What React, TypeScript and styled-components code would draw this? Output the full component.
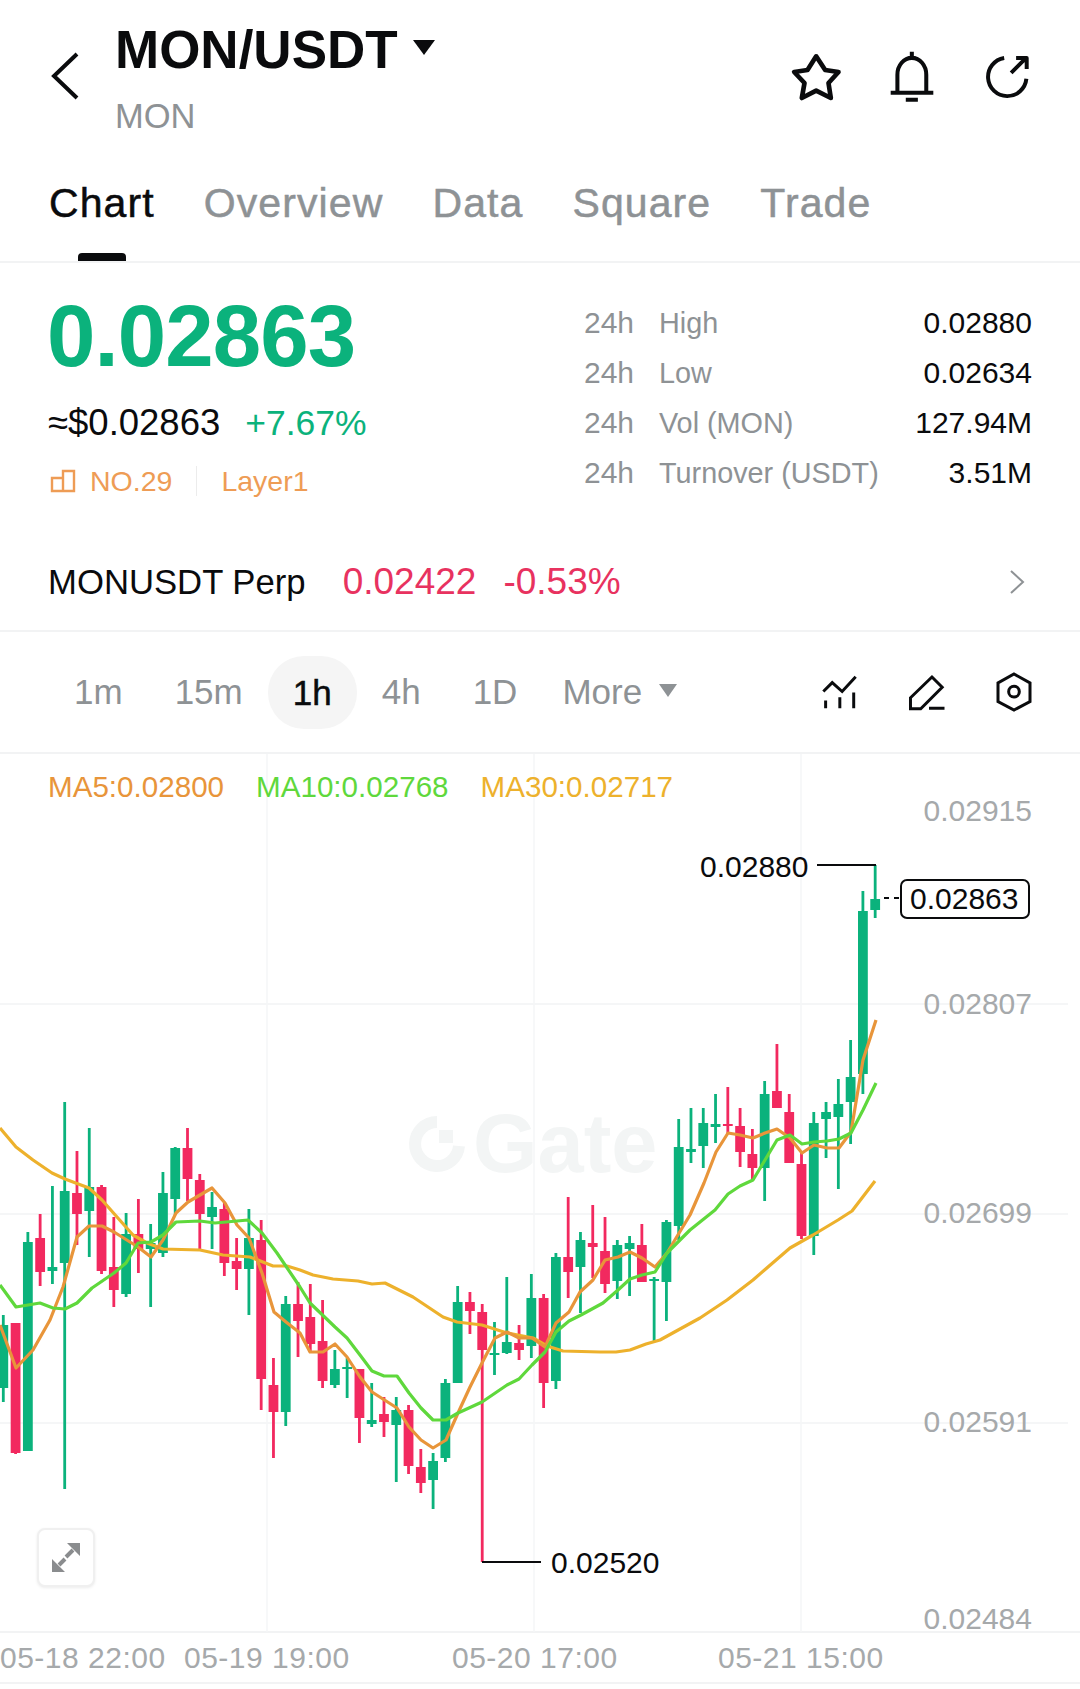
import React from 'react'
import styled, { createGlobalStyle } from 'styled-components'

const GlobalStyle = createGlobalStyle`
  html, body { margin: 0; padding: 0; background: #fff; }
  body { font-family: "Liberation Sans", Arial, sans-serif; color: #0a0b0d; }
`

const GREEN = '#0bb27c'
const RED = '#f2295f'
const ORANGE = '#ee9c55'
const GREY = '#8e9295'
const LIGHT_GREY = '#a6a9ab'
const LINE = '#f2f3f4'

type Candle = [number, number, number, number, 'g' | 'r']

// high, body top, body bottom, low, colour (page pixels)
const candles: Candle[] = [
  [1315, 1325, 1388, 1402, 'g'], [1323, 1323, 1453, 1454, 'r'], [1232, 1242, 1451, 1451, 'g'],
  [1214, 1238, 1272, 1286, 'r'], [1186, 1267, 1271, 1284, 'g'], [1102, 1191, 1263, 1489, 'g'],
  [1151, 1193, 1214, 1245, 'r'], [1128, 1187, 1211, 1257, 'g'], [1185, 1187, 1271, 1274, 'r'],
  [1217, 1267, 1290, 1307, 'r'], [1213, 1234, 1294, 1297, 'g'], [1199, 1234, 1249, 1273, 'r'],
  [1224, 1243, 1249, 1307, 'g'], [1172, 1193, 1253, 1257, 'g'], [1147, 1148, 1199, 1215, 'g'],
  [1128, 1148, 1179, 1201, 'r'], [1174, 1180, 1214, 1249, 'r'], [1192, 1207, 1217, 1249, 'g'],
  [1203, 1209, 1263, 1276, 'r'], [1238, 1261, 1269, 1290, 'r'], [1209, 1238, 1269, 1315, 'g'],
  [1220, 1240, 1379, 1410, 'r'], [1358, 1385, 1412, 1458, 'r'], [1296, 1304, 1412, 1426, 'g'],
  [1282, 1304, 1321, 1357, 'r'], [1284, 1317, 1344, 1352, 'r'], [1300, 1341, 1381, 1388, 'r'],
  [1350, 1369, 1385, 1388, 'g'], [1358, 1367, 1369, 1398, 'g'], [1369, 1369, 1418, 1443, 'r'],
  [1383, 1420, 1424, 1427, 'g'], [1397, 1414, 1422, 1437, 'r'], [1397, 1410, 1425, 1482, 'g'],
  [1405, 1410, 1466, 1474, 'r'], [1449, 1467, 1483, 1493, 'r'], [1453, 1461, 1480, 1509, 'g'],
  [1379, 1383, 1458, 1462, 'g'], [1286, 1302, 1383, 1383, 'g'], [1292, 1302, 1311, 1334, 'r'],
  [1304, 1312, 1350, 1562, 'r'], [1322, 1353, 1355, 1375, 'g'], [1277, 1342, 1353, 1354, 'g'],
  [1325, 1343, 1350, 1360, 'r'], [1274, 1298, 1346, 1358, 'g'], [1294, 1298, 1383, 1408, 'r'],
  [1253, 1257, 1381, 1389, 'g'], [1197, 1257, 1272, 1298, 'r'], [1232, 1240, 1267, 1313, 'g'],
  [1205, 1243, 1247, 1278, 'r'], [1217, 1251, 1284, 1293, 'r'], [1240, 1245, 1281, 1299, 'g'],
  [1236, 1243, 1249, 1296, 'g'], [1224, 1245, 1282, 1282, 'r'], [1277, 1279, 1281, 1341, 'g'],
  [1220, 1222, 1282, 1321, 'g'], [1119, 1147, 1226, 1240, 'g'], [1108, 1149, 1152, 1163, 'g'],
  [1108, 1123, 1146, 1168, 'g'], [1094, 1124, 1127, 1143, 'g'], [1087, 1124, 1125, 1133, 'r'],
  [1108, 1126, 1152, 1167, 'r'], [1129, 1154, 1168, 1180, 'r'], [1081, 1094, 1168, 1201, 'g'],
  [1044, 1091, 1108, 1108, 'r'], [1094, 1112, 1163, 1163, 'r'], [1153, 1164, 1236, 1239, 'r'],
  [1112, 1123, 1236, 1255, 'g'], [1102, 1112, 1119, 1158, 'g'], [1079, 1104, 1117, 1189, 'g'],
  [1040, 1077, 1102, 1144, 'g'], [891, 911, 1074, 1094, 'g'], [865, 899, 910, 918, 'g'],
]

const ma5 =
  '0,1325 16,1368 33,1350 50,1320 63,1287 77,1237 89,1226 102,1226 114,1232 138,1247 151,1257 163,1240 176,1213 188,1202 212,1188 225,1203 237,1225 249,1238 262,1273 274,1312 286,1322 300,1333 310,1352 323,1352 335,1344 347,1357 360,1377 372,1392 397,1408 409,1427 421,1440 433,1448 446,1440 458,1413 470,1387 482,1363 495,1338 507,1332 519,1338 532,1338 545,1347 556,1323 569,1312 580,1292 593,1280 605,1260 618,1257 630,1252 642,1258 655,1267 667,1253 690,1215 704,1183 716,1152 728,1133 740,1135 753,1138 765,1133 777,1129 790,1138 802,1153 814,1145 827,1148 839,1148 851,1132 863,1060 876,1020'
const ma10 =
  '0,1285 16,1307 40,1303 53,1308 65,1309 77,1303 92,1288 114,1273 126,1263 138,1243 151,1242 163,1235 176,1222 200,1221 215,1223 248,1220 262,1233 277,1253 300,1287 310,1303 335,1327 347,1338 360,1355 372,1371 384,1376 397,1376 409,1393 421,1408 433,1420 446,1420 458,1413 482,1402 507,1385 519,1379 532,1365 545,1352 556,1332 569,1321 581,1315 603,1303 618,1290 630,1279 642,1275 655,1272 667,1253 690,1230 715,1210 728,1194 740,1186 753,1180 765,1160 777,1140 790,1135 802,1144 814,1142 827,1141 839,1139 851,1133 863,1110 876,1083'
const ma30 =
  '0,1128 16,1147 33,1160 52,1173 65,1179 89,1188 102,1200 117,1217 133,1235 147,1243 163,1249 200,1250 223,1255 250,1257 273,1266 287,1266 300,1270 313,1275 333,1279 358,1281 372,1284 385,1283 413,1297 443,1317 457,1322 482,1325 507,1333 533,1338 547,1346 563,1351 600,1352 616,1352 630,1350 646,1344 660,1340 680,1329 700,1318 727,1300 753,1280 790,1248 813,1235 838,1220 852,1211 875,1181'

const gridRows = [1004, 1214, 1423]
const gridCols = [267, 534, 801]
const axisPrices: [string, number][] = [
  ['0.02915', 821],
  ['0.02807', 1014],
  ['0.02699', 1223],
  ['0.02591', 1432],
  ['0.02484', 1629],
]

const Page = styled.div`
  width: 1080px;
  height: 1689px;
  overflow: hidden;
  background: #fff;
`

const Header = styled.header`
  height: 148px;
  display: flex;
  align-items: flex-start;
  padding: 0 48px 0 50px;
  box-sizing: border-box;
`

const BackIcon = styled.svg`
  width: 32px;
  height: 52px;
  margin-top: 51px;
`

const TitleBlock = styled.div`
  margin-left: 33px;
  padding-top: 18px;
  flex: 1;
`

const Title = styled.h1`
  margin: 0;
  font-size: 53px;
  line-height: 63px;
  font-weight: 700;
  display: flex;
  align-items: center;
  gap: 15px;
`

const TitleCaret = styled.svg`
  width: 22px;
  height: 15px;
  margin-bottom: 4px;
`

const Subtitle = styled.div`
  font-size: 34.5px;
  line-height: 40px;
  color: ${GREY};
  margin-top: 15px;
`

const HeaderActions = styled.div`
  display: flex;
  align-items: center;
  margin-top: 50px;
`

const HeaderIcon = styled.svg<{ $w: number; $h: number; $gap?: number }>`
  width: ${(p) => p.$w}px;
  height: ${(p) => p.$h}px;
  margin-left: ${(p) => p.$gap || 0}px;
  fill: none;
  stroke: #0a0b0d;
  stroke-linejoin: round;
`

const Tabs = styled.nav`
  height: 115px;
  display: flex;
  gap: 49px;
  padding-left: 49px;
  box-sizing: border-box;
  border-bottom: 2px solid ${LINE};
`

const Tab = styled.div<{ $active?: boolean }>`
  position: relative;
  font-size: 41px;
  line-height: 48px;
  padding-top: 31px;
  letter-spacing: 1.1px;
  -webkit-text-stroke: 0.5px ${(p) => (p.$active ? '#0a0b0d' : GREY)};
  color: ${(p) => (p.$active ? '#0a0b0d' : GREY)};

  &::after {
    content: '';
    display: ${(p) => (p.$active ? 'block' : 'none')};
    position: absolute;
    left: 29px;
    top: 105px;
    width: 48px;
    height: 8px;
    border-radius: 4px 4px 0 0;
    background: #0a0b0d;
  }
`

const Overview = styled.section`
  height: 239px;
  display: flex;
  justify-content: space-between;
  padding: 0 48px;
  box-sizing: border-box;
`

const PriceBlock = styled.div`
  padding-top: 28px;
`

const BigPrice = styled.div`
  font-size: 87px;
  line-height: 90px;
  font-weight: 700;
  letter-spacing: -0.9px;
  margin-left: -1px;
  color: ${GREEN};
`

const PriceLine = styled.div`
  display: flex;
  gap: 25px;
  margin-top: 20px;
  font-size: 36.5px;
  line-height: 44px;
`

const Change = styled.span`
  color: ${GREEN};
  font-size: 35.5px;
`

const TagLine = styled.div`
  display: flex;
  align-items: center;
  margin-top: 18px;
  font-size: 28.5px;
  line-height: 36px;
  color: ${ORANGE};
`

const RankIcon = styled.svg`
  width: 26px;
  height: 24px;
  margin: 0 14px 0 2px;
  fill: none;
  stroke: ${ORANGE};
  stroke-width: 2.4;
`

const TagDivider = styled.span`
  width: 1px;
  height: 30px;
  background: #ececec;
  margin: 0 24px;
`

const Stats = styled.div`
  width: 448px;
  padding-top: 35px;
  font-size: 30px;
`

const StatRow = styled.div`
  height: 50px;
  display: flex;
  align-items: center;
  line-height: 50px;
`

const StatPeriod = styled.span`
  width: 75px;
  color: ${GREY};
`

const StatLabel = styled.span`
  color: ${GREY};
  flex: 1;
  font-size: 28.8px;
`

const StatValue = styled.span`
  color: #0a0b0d;
`

const PerpRow = styled.section`
  height: 130px;
  display: flex;
  align-items: center;
  padding: 32px 48px 0;
  box-sizing: border-box;
  border-bottom: 2px solid ${LINE};
  font-size: 34.7px;
`

const PerpPrice = styled.span`
  color: #e8325f;
  font-size: 37px;
  margin-left: 37px;
`

const PerpChange = styled.span`
  color: #e8325f;
  font-size: 37px;
  margin-left: 27px;
  flex: 1;
`

const PerpArrow = styled.svg`
  width: 18px;
  height: 26px;
  margin-right: 6px;
  fill: none;
  stroke: ${GREY};
  stroke-width: 2;
`

const Intervals = styled.section`
  height: 120px;
  display: flex;
  align-items: center;
  padding: 0 47px 0 74px;
  box-sizing: border-box;
  font-size: 35px;
`

const Interval = styled.div<{ $active?: boolean; $gap: number }>`
  margin-left: ${(p) => p.$gap}px;
  color: ${(p) => (p.$active ? '#0a0b0d' : GREY)};
  ${(p) =>
    p.$active
      ? `
    width: 89px;
    height: 73px;
    line-height: 73px;
    text-align: center;
    background: #f5f5f5;
    border-radius: 36px;
    -webkit-text-stroke: 0.5px #0a0b0d;
  `
      : ''}
`

const MoreCaret = styled.svg`
  width: 18px;
  height: 13px;
  margin-left: 17px;
  margin-bottom: 4px;
`

const IntervalTools = styled.div`
  margin-left: auto;
  display: flex;
  align-items: center;
`

const ToolIcon = styled.svg<{ $w: number; $h: number; $gap?: number }>`
  width: ${(p) => p.$w}px;
  height: ${(p) => p.$h}px;
  margin-left: ${(p) => p.$gap || 0}px;
  fill: none;
  stroke: #0a0b0d;
  stroke-width: 9;
`

const ChartArea = styled.section`
  position: relative;
  height: 881px;
  border-top: 2px solid ${LINE};
  border-bottom: 2px solid ${LINE};
  box-sizing: border-box;
`

const ChartSvg = styled.svg`
  display: block;
  width: 1080px;
  height: 877px;
  overflow: visible;
`

const AxisText = styled.text`
  font-size: 30px;
  fill: ${LIGHT_GREY};
`

const NoteText = styled.text`
  font-size: 30px;
  fill: #0a0b0d;
`

const Watermark = styled.text`
  font-size: 83px;
  font-weight: 700;
  fill: #f3f5f5;
`

const Legend = styled.div`
  position: absolute;
  left: 48px;
  top: 14px;
  display: flex;
  gap: 32px;
  font-size: 29.6px;
  line-height: 38px;
`

const LegendItem = styled.span<{ $color: string }>`
  color: ${(p) => p.$color};
`

const FullscreenButton = styled.div`
  position: absolute;
  left: 37px;
  top: 774px;
  width: 58px;
  height: 59px;
  box-sizing: border-box;
  border: 2px solid #f0f0f0;
  border-radius: 8px;
  background: #fff;
  box-shadow: 0 1px 3px rgba(0, 0, 0, 0.08);
  display: flex;
  align-items: center;
  justify-content: center;
`

const TimeAxis = styled.div`
  height: 51px;
  display: grid;
  grid-template-columns: 184px 268px 266px 1fr;
  align-items: center;
  border-bottom: 2px solid ${LINE};
  box-sizing: border-box;
  font-size: 30px;
  letter-spacing: 0.5px;
  color: ${LIGHT_GREY};
`

function Chart() {
  return (
    <ChartSvg viewBox="0 754 1080 877">
      {gridRows.map((y) => (
        <line key={y} x1="0" x2="1068" y1={y} y2={y} stroke={LINE} strokeWidth="1.5" />
      ))}
      {gridCols.map((x) => (
        <line key={x} x1={x} x2={x} y1="754" y2="1632" stroke="#f5f6f7" strokeWidth="1.5" />
      ))}

      {/* watermark */}
      <path d="M437 1122 A22 22 0 1 0 459 1146" fill="none" stroke="#f3f5f5" strokeWidth="12" />
      <rect x="439" y="1130" width="14" height="13" fill="#f3f5f5" />
      <Watermark x="473" y="1172">Gate</Watermark>

      {candles.map(([high, top, bottom, low, tone], i) => {
        const x = 3.3 + 12.28 * i
        const color = tone === 'g' ? GREEN : RED
        return (
          <g key={i} fill={color}>
            <rect x={x - 1.4} y={high} width="2.8" height={low - high} />
            <rect x={x - 4.9} y={top} width="9.8" height={Math.max(bottom - top, 2)} />
          </g>
        )
      })}

      <polyline points={ma30} fill="none" stroke="#edb12c" strokeWidth="3.2" strokeLinejoin="round" />
      <polyline points={ma5} fill="none" stroke="#e8953a" strokeWidth="3.2" strokeLinejoin="round" />
      <polyline points={ma10} fill="none" stroke="#5fd83c" strokeWidth="3.2" strokeLinejoin="round" />

      {axisPrices.map(([label, y]) => (
        <AxisText key={label} x="1032" y={y} textAnchor="end">
          {label}
        </AxisText>
      ))}

      {/* high / low notes */}
      <NoteText x="700" y="877">0.02880</NoteText>
      <line x1="817" x2="876" y1="865" y2="865" stroke="#0a0b0d" strokeWidth="2" />
      <NoteText x="551" y="1573">0.02520</NoteText>
      <line x1="482" x2="541" y1="1562" y2="1562" stroke="#0a0b0d" strokeWidth="2" />

      {/* last price tag */}
      <line x1="884" x2="900" y1="898" y2="898" stroke="#0a0b0d" strokeWidth="2" strokeDasharray="5 5" />
      <rect x="901" y="880" width="128" height="38" rx="6" fill="#fff" stroke="#0a0b0d" strokeWidth="2" />
      <NoteText x="910" y="909">0.02863</NoteText>
    </ChartSvg>
  )
}

export default function App() {
  return (
    <Page>
      <GlobalStyle />
      <Header>
        <BackIcon viewBox="0 0 32 52" fill="none" stroke="#0a0b0d" strokeWidth="4">
          <polyline points="27,3 4,25 27,47" />
        </BackIcon>
        <TitleBlock>
          <Title>
            MON/USDT
            <TitleCaret viewBox="0 0 22 15">
              <polygon points="0,0 22,0 11,15" fill="#0a0b0d" />
            </TitleCaret>
          </Title>
          <Subtitle>MON</Subtitle>
        </TitleBlock>
        <HeaderActions>
          <HeaderIcon $w={53} $h={50} viewBox="60 62 158 150" strokeWidth="14">
            <polygon points="138,75 165,116 205,122 175,155 182,200 138,178 95,200 103,155 72,122 112,116" />
          </HeaderIcon>
          <HeaderIcon $w={48} $h={54} $gap={45} viewBox="355 55 143 160" strokeWidth="12">
            <path d="M426 60 V76 M383 180 V128 A43 50 0 0 1 469 128 V180 M363 182 H490 M408 203 H444" />
          </HeaderIcon>
          <HeaderIcon $w={49} $h={48} $gap={47} viewBox="640 70 148 145" strokeWidth="12">
            <path d="M704 85 A58 58 0 1 0 771 148 M725 130 L768 87 M740 85 H772 V118" />
          </HeaderIcon>
        </HeaderActions>
      </Header>

      <Tabs>
        <Tab $active>Chart</Tab>
        <Tab>Overview</Tab>
        <Tab>Data</Tab>
        <Tab>Square</Tab>
        <Tab>Trade</Tab>
      </Tabs>

      <Overview>
        <PriceBlock>
          <BigPrice>0.02863</BigPrice>
          <PriceLine>
            <span>≈$0.02863</span>
            <Change>+7.67%</Change>
          </PriceLine>
          <TagLine>
            <RankIcon viewBox="0 0 26 24">
              <path d="M2 9 H13 V2 H24 V22 H2 Z M13 9 V22" />
            </RankIcon>
            NO.29
            <TagDivider />
            Layer1
          </TagLine>
        </PriceBlock>
        <Stats>
          <StatRow>
            <StatPeriod>24h</StatPeriod>
            <StatLabel>High</StatLabel>
            <StatValue>0.02880</StatValue>
          </StatRow>
          <StatRow>
            <StatPeriod>24h</StatPeriod>
            <StatLabel>Low</StatLabel>
            <StatValue>0.02634</StatValue>
          </StatRow>
          <StatRow>
            <StatPeriod>24h</StatPeriod>
            <StatLabel>Vol (MON)</StatLabel>
            <StatValue>127.94M</StatValue>
          </StatRow>
          <StatRow>
            <StatPeriod>24h</StatPeriod>
            <StatLabel>Turnover (USDT)</StatLabel>
            <StatValue>3.51M</StatValue>
          </StatRow>
        </Stats>
      </Overview>

      <PerpRow>
        <span>MONUSDT Perp</span>
        <PerpPrice>0.02422</PerpPrice>
        <PerpChange>-0.53%</PerpChange>
        <PerpArrow viewBox="0 0 18 26">
          <polyline points="3,2 15,13 3,24" />
        </PerpArrow>
      </PerpRow>

      <Intervals>
        <Interval $gap={0}>1m</Interval>
        <Interval $gap={52}>15m</Interval>
        <Interval $gap={25} $active>
          1h
        </Interval>
        <Interval $gap={25}>4h</Interval>
        <Interval $gap={52}>1D</Interval>
        <Interval $gap={45}>More</Interval>
        <MoreCaret viewBox="0 0 18 13">
          <polygon points="0,0 18,0 9,13" fill={GREY} />
        </MoreCaret>
        <IntervalTools>
          <ToolIcon $w={39} $h={37} viewBox="60 42 118 112">
            <path d="M70 95 L97 68 L127 95 L168 50 M77 122 V146 M120 112 V146 M162 98 V146" />
          </ToolIcon>
          <ToolIcon $w={40} $h={37} $gap={48} viewBox="322 38 120 112">
            <path d="M397 47 L428 78 L363 143 H332 V110 Z M388 142 H435" />
          </ToolIcon>
          <ToolIcon $w={38} $h={42} $gap={48} viewBox="585 36 114 126">
            <polygon points="642,45 690,72 690,128 642,153 594,128 594,72" />
            <circle cx="642" cy="98" r="16" />
          </ToolIcon>
        </IntervalTools>
      </Intervals>

      <ChartArea>
        <Chart />
        <Legend>
          <LegendItem $color="#e8953a">MA5:0.02800</LegendItem>
          <LegendItem $color="#5fd83c">MA10:0.02768</LegendItem>
          <LegendItem $color="#edb12c">MA30:0.02717</LegendItem>
        </Legend>
        <FullscreenButton>
          <svg width="30" height="31" viewBox="0 0 30 31">
            <path d="M16 1 H29 V14 Z M1 17 V30 H14 Z" fill="#8a8c8e" />
            <path d="M22 8 L15 15 M8 23 L14 17" stroke="#8a8c8e" strokeWidth="4" />
          </svg>
        </FullscreenButton>
      </ChartArea>

      <TimeAxis>
        <span>05-18 22:00</span>
        <span>05-19 19:00</span>
        <span>05-20 17:00</span>
        <span>05-21 15:00</span>
      </TimeAxis>
    </Page>
  )
}
